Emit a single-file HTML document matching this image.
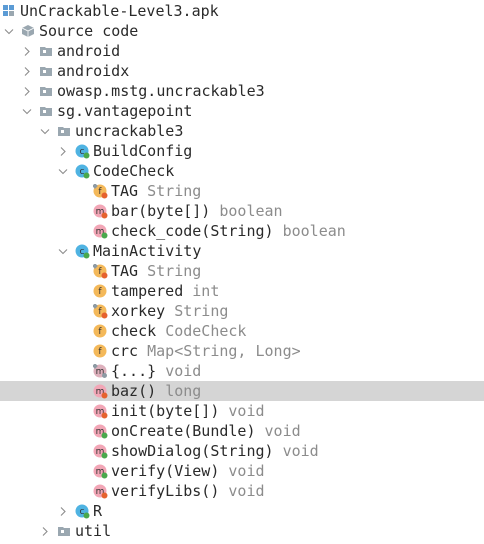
<!DOCTYPE html>
<html><head><style>
body{margin:0;width:484px;height:544px;background:#fff;position:relative;overflow:hidden;font-family:"DejaVu Sans Mono","Liberation Mono",monospace;font-size:15px;color:#2a2a2a}
.r{position:absolute;left:0;width:484px;height:20px;line-height:20px;white-space:pre}
.t{position:absolute;top:0}
.g{color:#8c8c8c}
.ar{position:absolute;top:0;width:10px;height:20px}
.ic{position:absolute;top:3px;width:15px;height:15px}
.hl{background:#d5d5d5}
</style></head><body>
<div id="c"></div>
<script>
const rows=[
[0,'','apk','UnCrackable-Level3.apk',''],
[1,'v','pkg','Source code',''],
[2,'>','dir','android',''],
[2,'>','dir','androidx',''],
[2,'>','dir','owasp.mstg.uncrackable3',''],
[2,'v','dir','sg.vantagepoint',''],
[3,'v','dir','uncrackable3',''],
[4,'>','c','BuildConfig',''],
[4,'v','c','CodeCheck',''],
[5,'','fs','TAG','String'],
[5,'','mr','bar(byte[])','boolean'],
[5,'','mg','check_code(String)','boolean'],
[4,'v','c','MainActivity',''],
[5,'','fs','TAG','String'],
[5,'','f','tampered','int'],
[5,'','fs','xorkey','String'],
[5,'','f','check','CodeCheck'],
[5,'','f','crc','Map<String, Long>'],
[5,'','ms','{...}','void'],
[5,'','mr','baz()','long',1],
[5,'','mr','init(byte[])','void'],
[5,'','mg','onCreate(Bundle)','void'],
[5,'','mg','showDialog(String)','void'],
[5,'','mg','verify(View)','void'],
[5,'','mr','verifyLibs()','void'],
[4,'>','c','R',''],
[3,'>','dir','util','']
];
function icon(k){
 if(k=='apk')return '<svg width="15" height="15"><rect x="1" y="1" width="5" height="5" fill="#5b9bd5"/><rect x="7" y="1" width="5" height="5" fill="#5b9bd5"/><rect x="1" y="7" width="5" height="5" fill="#5b9bd5"/><rect x="7" y="7" width="5" height="5" fill="#9aa7b0"/></svg>';
 if(k=='pkg')return '<svg width="15" height="15"><path d="M7 1L13 4V10L7 13L1 10V4Z" fill="#9aa7b0"/><path d="M1 4L7 7L13 4M7 7V13" stroke="#fff" stroke-width="0.8" fill="none"/></svg>';
 if(k=='dir')return '<svg width="15" height="15"><path d="M1 3H6L7 4H13V12H1Z" fill="#9aa7b0"/><rect x="4" y="6" width="3" height="3" fill="#fff"/></svg>';
 let fill,l,dot=null,lock=false;
 if(k=='c'){fill='#4fb3e2';l='c';dot='#49a84c'}
 else if(k[0]=='f'){fill='#f4b95a';l='f';if(k=='fs'){dot='#e5622e';lock=true}}
 else {fill='#f2a6b6';l='m';dot=k=='mr'?'#e5622e':k=='mg'?'#49a84c':null;if(k=='ms'){fill='#ddb0bc';lock=true}}
 let s='<svg width="15" height="15"><circle cx="7" cy="7" r="6.5" fill="'+fill+'"/><text x="7" y="10" font-size="9" text-anchor="middle" font-family="DejaVu Sans" fill="#333">'+l+'</text>';
 if(lock)s+='<rect x="0" y="0" width="4" height="4" fill="#8d9aa3" transform="rotate(45 2 2)"/>';
 if(dot)s+='<circle cx="11.5" cy="11.5" r="3" fill="'+dot+'"/>';
 if(k=='ms')s+='<circle cx="11.5" cy="11.5" r="2.5" fill="#8d9aa3"/>';
 return s+'</svg>';
}
let h='';
rows.forEach((r,i)=>{
 const [L,a,k,t,ty,hl]=r;
 const tx=L==0?20:21+18*L;
 h+='<div class="r'+(hl?' hl':'')+'" style="top:'+(i*20+1)+'px">';
 if(a=='>')h+='<svg class="ar" style="left:'+(tx-35)+'px" viewBox="0 0 10 20"><path d="M3 6.5L7 10.5L3 14.5" stroke="#8c8c8c" fill="none" stroke-width="1.1"/></svg>';
 if(a=='v')h+='<svg class="ar" style="left:'+(tx-35)+'px" viewBox="0 0 10 20"><path d="M1 8.5L5 12.5L9 8.5" stroke="#8c8c8c" fill="none" stroke-width="1.1"/></svg>';
 h+='<span class="ic" style="left:'+(L==0?2:tx-18)+'px">'+icon(k)+'</span>';
 h+='<span class="t" style="left:'+tx+'px">'+t.replace(/</g,'&lt;')+(ty?' <span class="g">'+ty.replace(/</g,'&lt;').replace(/>/g,'&gt;')+'</span>':'')+'</span></div>';
});
document.getElementById('c').innerHTML=h;
</script>
</body></html>
